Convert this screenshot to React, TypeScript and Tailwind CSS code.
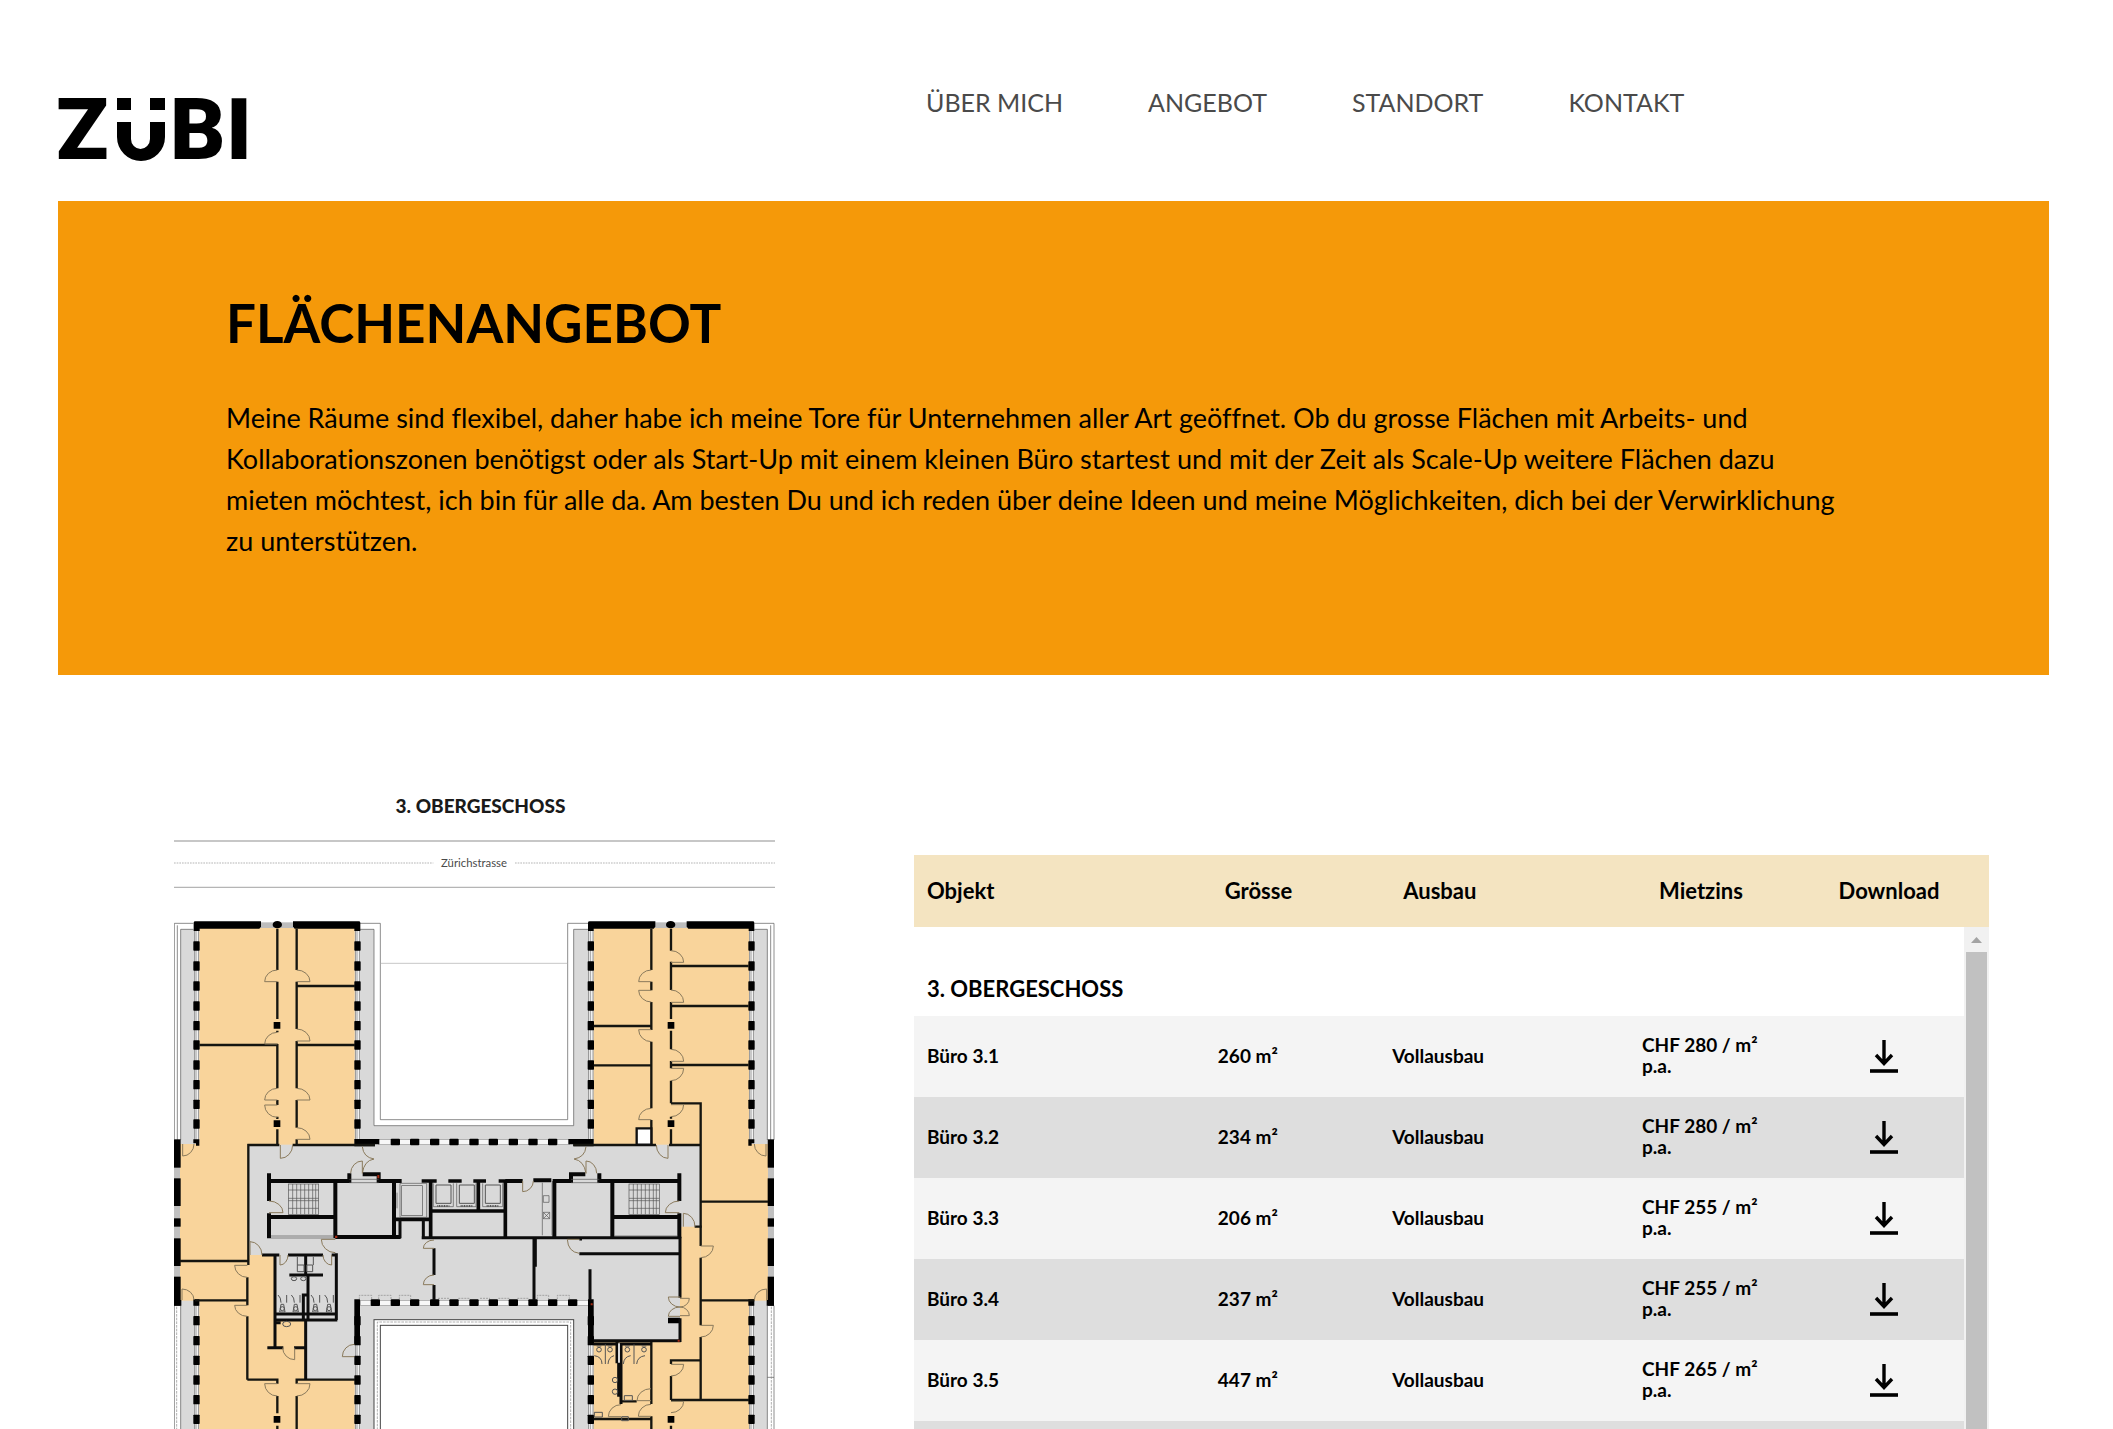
import React from 'react';

const NAV = ['ÜBER MICH', 'ANGEBOT', 'STANDORT', 'KONTAKT'];

const OFFICES = [
  { name: 'Büro 3.1', size: '260 m²', fit: 'Vollausbau', rent: 'CHF 280 / m² p.a.' },
  { name: 'Büro 3.2', size: '234 m²', fit: 'Vollausbau', rent: 'CHF 280 / m² p.a.' },
  { name: 'Büro 3.3', size: '206 m²', fit: 'Vollausbau', rent: 'CHF 255 / m² p.a.' },
  { name: 'Büro 3.4', size: '237 m²', fit: 'Vollausbau', rent: 'CHF 255 / m² p.a.' },
  { name: 'Büro 3.5', size: '447 m²', fit: 'Vollausbau', rent: 'CHF 265 / m² p.a.' },
  { name: '', size: '', fit: '', rent: '' },
];

function Logo() {
  return (
    <svg viewBox="0 -20 200 110" className="h-[110px] w-[200px]" role="img" aria-label="ZÜBI">
      <g fontFamily="Roboto" fontWeight="900" fontSize="86">
        <text x="-2" y="62">Z</text>
        <text x="112" y="62">B</text>
        <text x="168" y="62">I</text>
      </g>
      <rect x="59" y="1" width="14" height="12" />
      <rect x="92" y="1" width="15" height="12" />
      <path d="M59 25H73V42A9.5 10 0 0 0 92 42V25H107V40A24 24 0 0 1 59 40Z" />
    </svg>
  );
}

/* Door leaf hinged on a vertical wall at x, swinging from a to b. */
function VDoor({ x, a, b, d }: { x: number; a: number; b: number; d: number }) {
  const s = d > 0 === b > a ? 1 : 0;
  return <path d={`M${x} ${a}A${Math.abs(d)} ${Math.abs(b - a)} 0 0 ${s} ${x + d} ${b}H${x}`} />;
}

/* Door leaf hinged on a horizontal wall at y, swinging from a to b. */
function HDoor({ y, a, b, d }: { y: number; a: number; b: number; d: number }) {
  const s = d > 0 === a > b ? 1 : 0;
  return <path d={`M${a} ${y}A${Math.abs(b - a)} ${Math.abs(d)} 0 0 ${s} ${b} ${y + d}V${y}`} />;
}

const V_DOORS: number[][] = [
  [352, 180, 215, -38], [352, 367, 402, -38], [352, 535, 570, -38], [352, 622, 585, -38],
  [410, 180, 215, 40], [410, 357, 393, 40], [410, 535, 570, 40], [410, 653, 688, 40],
  [1474, 180, 215, -38], [1474, 276, 241, -38], [1474, 395, 359, -38], [1474, 595, 629, -38],
  [1533, 122, 157, 38], [1533, 240, 277, 38], [1533, 418, 454, 38], [1533, 512, 475, 38], [1533, 620, 584, 38],
  [262, 1102, 1066, -38], [262, 1219, 1186, -38], [526, 1028, 988, -42], [822, 990, 1015, -32], [822, 1095, 1124, -32],
  [1560, 1191, 1161, -35], [1560, 1191, 1219, -35], [1560, 1191, 1165, 28], [1560, 1191, 1217, 28],
  [1622, 1043, 1008, 38], [1622, 1281, 1246, 38], [1533, 1398, 1363, 38], [1533, 1508, 1474, 38],
  [352, 1458, 1421, -38], [410, 1458, 1421, 40], [583, 1303, 1340, -36], [1473, 1483, 1519, -38], [1473, 1436, 1472, -42],
  [1383, 1484, 1520, -38], [327, 873, 908, 42], [1558, 873, 908, -42],
];

const H_DOORS: number[][] = [
  [702, 102, 68, 36], [705, 398, 361, 40], [705, 1489, 1524, 40], [702, 1783, 1818, 36],
  [1170, 102, 66, -33], [1170, 1783, 1820, -33], [1035, 306, 270, -40], [790, 572, 607, -37],
  [790, 1310, 1278, -37], [950, 1605, 1570, -40], [1313, 368, 404, 36], [1035, 384, 360, 30],
  [1035, 489, 515, 30], [813, 1120, 1088, 32],
];

const PIERS_UPPER = [108, 168, 228, 288, 347, 405, 465, 524, 583, 642];
const PIERS_LOWER = [1232, 1292, 1351, 1410, 1469, 1528];
const FACADES = [100, 583, 1283, 1765];
const PIERS_TOP = [706, 764, 824, 882, 942, 1000, 1060, 1119, 1178];
const PIERS_COURT = [646, ...PIERS_TOP, 1238];
const OUTER: number[][] = [[688, 85], [805, 83], [925, 25], [985, 83], [1100, 87]];

function Stairs({ x }: { x: number }) {
  return (
    <g>
      <rect x={x} y="822" width="91" height="91" fill="none" />
      <path d={`M${x} 840h91M${x} 865h91M${x} 872h91M${x} 895h91`} />
      {[13, 25, 37, 49, 61, 73, 82].map((s) => (
        <path key={s} d={`M${x + s} 822v91`} />
      ))}
    </g>
  );
}

function FloorPlan() {
  return (
    <svg viewBox="42 -240 1803 1800" className="mt-[12px] block w-full" role="img" aria-label="Grundriss 3. Obergeschoss">
      <g stroke="#b5b5b5" strokeWidth="4">
        <path d="M42 -207H1845M42 -68H1845" />
        <path d="M42 -141H820M1065 -141H1845" strokeWidth="3" strokeDasharray="5 3" />
      </g>
      <text x="942" y="-129" textAnchor="middle" fontFamily="Lato" fontSize="34" fill="#4a4a4a">Zürichstrasse</text>

      {/* circulation and facade zones */}
      <path fill="#d9d9d9" d="M62 58H642V647H1241V58H1822V1560H1241V1229H642V1560H62Z" />
      <g fill="none" stroke="#555" strokeWidth="2">
        <path d="M100 40H43V688M62 690V58H100M52 46V690M600 40H661V629H1223V40H1284M600 58H642V647H1241V58H1284" />
        <path d="M1783 40H1842V690M1783 58H1822V690M1832 46V690" />
        <path d="M43 1187V1560M62 1187V1560M1842 1187V1560M1822 1187V1560M1822 1402H1842" />
        <path d="M661 160H1223" stroke="#aaa" />
      </g>
      <rect x="642" y="1229" width="599" height="340" fill="#fff" stroke="#444" strokeWidth="3" />
      <rect x="661" y="1246" width="562" height="330" fill="none" stroke="#444" strokeWidth="3" />
      <g fill="none" stroke="#888" strokeWidth="2" strokeDasharray="8 3">
        <path d="M652 1560V1236H1232V1560M50 1190V1560M1834 1190V1560" />
      </g>

      {/* rentable office areas */}
      <g fill="#f9d49b">
        <rect x="118" y="54" width="466" height="650" />
        <rect x="1301" y="54" width="466" height="650" />
        <rect x="58" y="702" width="206" height="470" />
        <rect x="1622" y="702" width="204" height="470" />
        <path d="M118 1170H262V1035H345V1232H437V1410H584V1560H118Z" />
        <path d="M1560 950H1622V1170H1767V1560H1301V1296H1560Z" />
      </g>

      {/* facade strips with piers */}
      {FACADES.map((x) => (
        <g key={x}>
          <g fill="#f2f2f2" stroke="#777" strokeWidth="2">
            <rect x={x + 3} y="56" width="13" height="640" />
            <rect x={x + 3} y="1187" width="13" height="380" />
            <path d={`M${x + 8} 56V696M${x + 8} 1187V1560`} />
          </g>
          {[...PIERS_UPPER, ...PIERS_LOWER].map((y) => (
            <rect key={y} x={x} y={y - 14} width="19" height="28" rx="2" />
          ))}
        </g>
      ))}
      <g fill="#f7f7f7" stroke="#999" strokeWidth="2">
        <rect x="656" y="689" width="572" height="15" />
        <rect x="601" y="1171" width="684" height="15" />
      </g>
      {PIERS_TOP.map((x) => (
        <rect key={x} x={x - 14} y="686" width="28" height="20" rx="3" />
      ))}
      {PIERS_COURT.map((x) => (
        <rect key={x} x={x - 14} y="1168" width="28" height="20" rx="3" />
      ))}
      <rect x="42" y="690" width="18" height="495" fill="#c0c0c0" />
      <rect x="1824" y="690" width="18" height="495" fill="#c0c0c0" />
      {OUTER.map(([y, h]) => (
        <g key={y}>
          <rect x="42" y={y} width="20" height={h} />
          <rect x="1823" y={y} width="19" height={h} />
        </g>
      ))}
      <g fill="#bdbdbd">
        <rect x="300" y="37" width="100" height="17" />
        <rect x="1483" y="37" width="98" height="17" />
      </g>
      <g>
        <path d="M101 63V38Q101 34 106 34H303V50L298 56H119V63Z" />
        <path d="M601 63V38Q601 34 596 34H399V50L404 56H583V63Z" />
        <path d="M1284 63V38Q1284 34 1289 34H1486V50L1481 56H1301V63Z" />
        <path d="M1783 63V38Q1783 34 1778 34H1580V50L1585 56H1766V63Z" />
        <ellipse cx="352" cy="44" rx="14" ry="11" />
        <ellipse cx="1532" cy="44" rx="14" ry="11" />
        <path d="M583 687H658V703H645V709H583ZM1301 687H1225V703H1240V709H1301Z" />
        <path d="M100 688H118V707H108V700H100ZM1783 688H1765V707H1775V700H1783Z" />
        <path d="M100 1168H118V1187H100ZM1765 1168H1783V1187H1765ZM42 1170H64V1187H42ZM1820 1170H1842V1187H1820Z" />
        <path d="M583 1168H600V1304H583ZM1284 1168H1301V1303H1284Z" />
        <path d="M341 336h20v20h-20zM341 631h20v20h-20zM341 1518h20v20h-20zM1523 336h20v20h-20zM1523 631h20v20h-20zM1523 1518h20v20h-20zM1524 1223h36v17h-36z" />
      </g>

      {/* partition walls */}
      <g fill="none" stroke="#151510" strokeWidth="7">
        <path d="M352 56V180M352 215V327M352 362V367M352 402V535M352 570V585M352 620V627M352 658V705" />
        <path d="M410 56V180M410 215V357M410 393V535M410 570V653M410 688V705M410 228H585M118 405H354M410 405H585" />
        <path d="M262 705H358M398 705H645M265 702V1065M262 1102V1186M262 1219V1409M60 1053H265M105 1171H265" />
        <path d="M1474 56V180M1474 215V241M1474 276V360M1474 395V595M1474 630V705M1301 348H1474M1301 466H1474" />
        <path d="M1533 56V122M1533 155V240M1533 276V327M1533 362V418M1533 453V475M1533 512V580M1533 620V626M1533 658V705" />
        <path d="M1533 168H1766M1533 288H1766M1533 465H1766M1533 580H1622V1008M1240 705H1488M1527 705H1622" />
        <path d="M1622 875H1824M1622 1043V1246M1622 1281V1470M1622 1171H1783M1604 950H1625M1533 1470H1767" />
        <path d="M1533 1362V1351H1622M1533 1398V1470M1533 1547V1560M1474 1295V1482M1474 1519V1560M1301 1527H1474" />
        <path d="M262 1409H352V1421M585 1409H410V1421M352 1458V1510M352 1547V1560M410 1458V1560M1383 1474H1430" />
      </g>
      <path d="M1430 655H1474V704H1430Z" fill="#fff" stroke="#111" strokeWidth="7" />

      {/* load-bearing core walls */}
      <g fill="none" stroke="#080808" strokeWidth="12">
        <path d="M327 790V873M327 910V985M327 813H568V790M327 921H526M526 813V985M608 793H656V813H725M702 813V985M526 981H722" />
        <path d="M785 813H830M865 813H905M940 813H978M1016 813H1036V985M812 813V985M705 928H812M812 903H1036M955 813V903" strokeWidth="11" />
        <path d="M1036 813H1088M1120 811H1174M1183 813V985M1178 813H1233V793H1276M1318 790V813H1558M1357 813V985M1357 921H1560M1558 790V873M1558 910V985" />
      </g>
      <g fill="none" stroke="#0c0c0c" strokeWidth="9">
        <path d="M720 928V985M790 928V985M785 983H1560M1560 980V1163M1560 1225V1296M1301 1292H1562M1122 983V1171M1126 985V1070" />
        <path d="M822 1015V1095M822 1125V1170M1258 1031H1558M1258 987H1266M1290 1078V1170" />
        <path d="M306 1035H358M384 1035H489M515 1035H531M345 1035V1313M437 1035V1095M388 1095H489M444 1095V1230M529 1030V1230M345 1212H530M345 1230H532M430 1230V1155H444" />
        <path d="M437 1230V1409M322 1313H370M402 1313H437M345 1238H362M1383 1300V1482M1376 1300V1460M1371 1295V1360M1301 1302H1474" />
      </g>
      <path d="M1377 1300V1358" stroke="#d9d9d9" strokeWidth="6" />

      {/* stairs, lifts and kitchen */}
      <g fill="none" stroke="#555" strokeWidth="2">
        <Stairs x={385} />
        <Stairs x={1407} />
        <path d="M568 808H656M568 818H656M1233 808H1318M1233 818H1318M333 978H520M333 984H520M1363 978H1552" />
        <rect x="725" y="827" width="62" height="90" />
        <path d="M720 820H800V922H720ZM711 848V895" />
        <path d="M828 825h45v55h-45zM898 825h45v55h-45zM976 825h45v55h-45z" strokeWidth="3" />
        <path d="M820 820V890H880V820M890 820V890H948V820M968 820V890H1028V820" />
        <path d="M832 888h36M902 888h36M980 888h36" strokeWidth="6" strokeDasharray="3 2" />
        <path d="M1147 818V976M1176 818V976M1150 857h17v20h-17zM1150 907h19v19h-19zM1150 907l19 19M1169 907l-19 19" />
      </g>

      {/* sanitary fittings and furniture */}
      <g fill="none" stroke="#555" strokeWidth="3">
        <path d="M412 1065h20v20h-20zM440 1065h18v20h-18zM412 1040V1065M460 1040V1065" />
        {[367, 407, 466, 507].map((x) => (
          <g key={x}>
            <path d={`M${x - 8} 1206L${x - 4} 1183H${x + 4}L${x + 8} 1206Z`} />
            <circle cx={x} cy="1196" r="6" />
            <path d={`M${x - 13} 1155Q${x - 4} 1162 ${x - 4} 1178M${x + 13} 1155V1178`} />
          </g>
        ))}
        {[1317, 1350, 1402, 1452].map((x) => (
          <g key={x}>
            <circle cx={x} cy="1319" r="7" />
            <path d={`M${x - 7} 1308H${x + 7}`} />
          </g>
        ))}
        <path d="M1336 1303V1362M1422 1303V1362M1303 1337Q1326 1340 1326 1362M1362 1337Q1345 1342 1344 1362M1390 1362Q1392 1340 1412 1337M1430 1362Q1432 1340 1455 1337" />
        <circle cx="1365" cy="1410" r="8" />
        <circle cx="1365" cy="1445" r="8" />
        <ellipse cx="380" cy="1242" rx="12" ry="8" />
        <ellipse cx="402" cy="1106" rx="8" ry="6" />
        <ellipse cx="430" cy="1106" rx="8" ry="6" />
        <path d="M1393 1457h24v14h-24zM1303 1507h24v14h-24zM1385 1520h20v12h-20z" />
      </g>
      <g fill="none" stroke="#888" strokeWidth="2" strokeDasharray="6 3">
        <path d="M598 1168V1156H635V1168M656 1168V1156H693V1168M718 1168V1156H752V1168M1132 1168V1156H1166V1168M1192 1168V1156H1228V1168M834 1165H870M895 1165H930M960 1165H990M1015 1165H1050M1072 1165H1105" />
      </g>

      {/* doors */}
      <g fill="none" stroke="#8a7a5c" strokeWidth="3">
        {V_DOORS.map(([x, a, b, d], i) => (
          <VDoor key={i} x={x} a={a} b={b} d={d} />
        ))}
        {H_DOORS.map(([y, a, b, d], i) => (
          <HDoor key={i} y={y} a={a} b={b} d={d} />
        ))}
        <path d="M607 710Q610 742 642 747Q612 752 607 790M1278 710Q1275 742 1242 747Q1272 752 1278 790M1222 988H1258M1222 988Q1224 1026 1258 1030" />
      </g>
      <path fill="#a52a12" d="M525 977h7v7h-7zM652 795h6v10h-6zM1292 1180h6v6h-6zM1553 1289h6v6h-6z" />
    </svg>
  );
}

function DownloadIcon() {
  return (
    <svg viewBox="0 0 30 34" className="h-[34px] w-[30px]" fill="none" stroke="#000" aria-hidden="true">
      <path d="M15 0V23M7 15L15 23.5L23 15" strokeWidth="3.4" />
      <path d="M1 31H29" strokeWidth="3.6" />
    </svg>
  );
}

function Columns() {
  return (
    <colgroup>
      <col className="w-[27.7%]" />
      <col className="w-[16.6%]" />
      <col className="w-[23.8%]" />
      <col className="w-[16.7%]" />
      <col className="w-[15.2%]" />
    </colgroup>
  );
}

export default function App() {
  return (
    <div className="h-screen overflow-hidden bg-white pr-16 pl-[58px] font-['Lato',sans-serif] text-black [font-variant-ligatures:none]">
      <header className="grid h-[201px] grid-cols-[868fr_1123fr]">
        <a href="#start" className="mt-[77px] self-start justify-self-start">
          <Logo />
        </a>
        <nav className="mt-[82px] flex items-start gap-[85px] text-[25px] leading-10 text-[#4a4a4a]">
          {NAV.map((item) => (
            <a key={item} href={`#${item.toLowerCase()}`} className="whitespace-nowrap">
              {item}
            </a>
          ))}
        </nav>
      </header>

      <main>
        <section className="min-h-[474px] bg-[#f59909] px-[168px] pt-[90px]">
          <h1 className="text-[53px] leading-[64px] font-bold">FLÄCHENANGEBOT</h1>
          <p className="mt-[42px] max-w-[1622px] text-[27px] leading-[41px]">
            Meine Räume sind flexibel, daher habe ich meine Tore für Unternehmen aller Art geöffnet. Ob du grosse Flächen mit Arbeits- und
            Kollaborationszonen benötigst oder als Start-Up mit einem kleinen Büro startest und mit der Zeit als Scale-Up weitere Flächen dazu
            mieten möchtest, ich bin für alle da. Am besten Du und ich reden über deine Ideen und meine Möglichkeiten, dich bei der Verwirklichung
            zu unterstützen.
          </p>
        </section>

        <section className="grid grid-cols-[601fr_1075fr] items-start gap-[139px] pr-[60px] pl-[116px]">
          <div className="pt-[119px]">
            <h2 className="pl-3 text-center text-[19px] leading-6 font-black text-[#1a1a1a]">3. OBERGESCHOSS</h2>
            <FloorPlan />
          </div>

          <div className="pt-[180px]">
            <table className="w-full table-fixed bg-[#f4e4c1] text-left text-[22px] leading-6 font-bold">
              <Columns />
              <thead>
                <tr className="h-[72px]">
                  <th className="pl-[13px]">Objekt</th>
                  <th className="pl-[13px]">Grösse</th>
                  <th className="pl-[13px]">Ausbau</th>
                  <th className="pl-[13px]">Mietzins</th>
                  <th className="pl-[13px]">Download</th>
                </tr>
              </thead>
            </table>
            <div className="flex max-h-[640px] overflow-hidden">
              <table className="w-full min-w-0 flex-1 table-fixed text-left text-[19px] leading-[21px] font-bold">
                <Columns />
                <tbody>
                  <tr className="h-[89px]">
                    <th colSpan={5} className="pt-[34px] pl-[13px] text-[22px] leading-6">
                      3. OBERGESCHOSS
                    </th>
                  </tr>
                  {OFFICES.map((o, i) => (
                    <tr key={i} className="h-[81px] odd:bg-[#dedede] even:bg-[#f4f4f4]">
                      <td className="pb-[3px] pl-[13px]">{o.name}</td>
                      <td className="pb-[3px] pl-[13px]">{o.size}</td>
                      <td className="pb-[3px] pl-[13px]">{o.fit}</td>
                      <td className="pr-9 pb-[3px] pl-[13px]">{o.rent}</td>
                      <td className="text-center">
                        {o.name && (
                          <a href="#download" aria-label={`${o.name} herunterladen`} className="inline-block align-middle">
                            <DownloadIcon />
                          </a>
                        )}
                      </td>
                    </tr>
                  ))}
                </tbody>
              </table>
              <div className="flex w-[25px] flex-col items-center bg-[#f1f1f1]" aria-hidden="true">
                <svg viewBox="0 0 25 25" className="h-[25px] w-[25px] shrink-0" fill="#a3a3a3">
                  <path d="M7 16L12.5 10L18 16Z" />
                </svg>
                <div className="w-[21px] flex-1 bg-[#c1c1c1]" />
              </div>
            </div>
          </div>
        </section>
      </main>
    </div>
  );
}
